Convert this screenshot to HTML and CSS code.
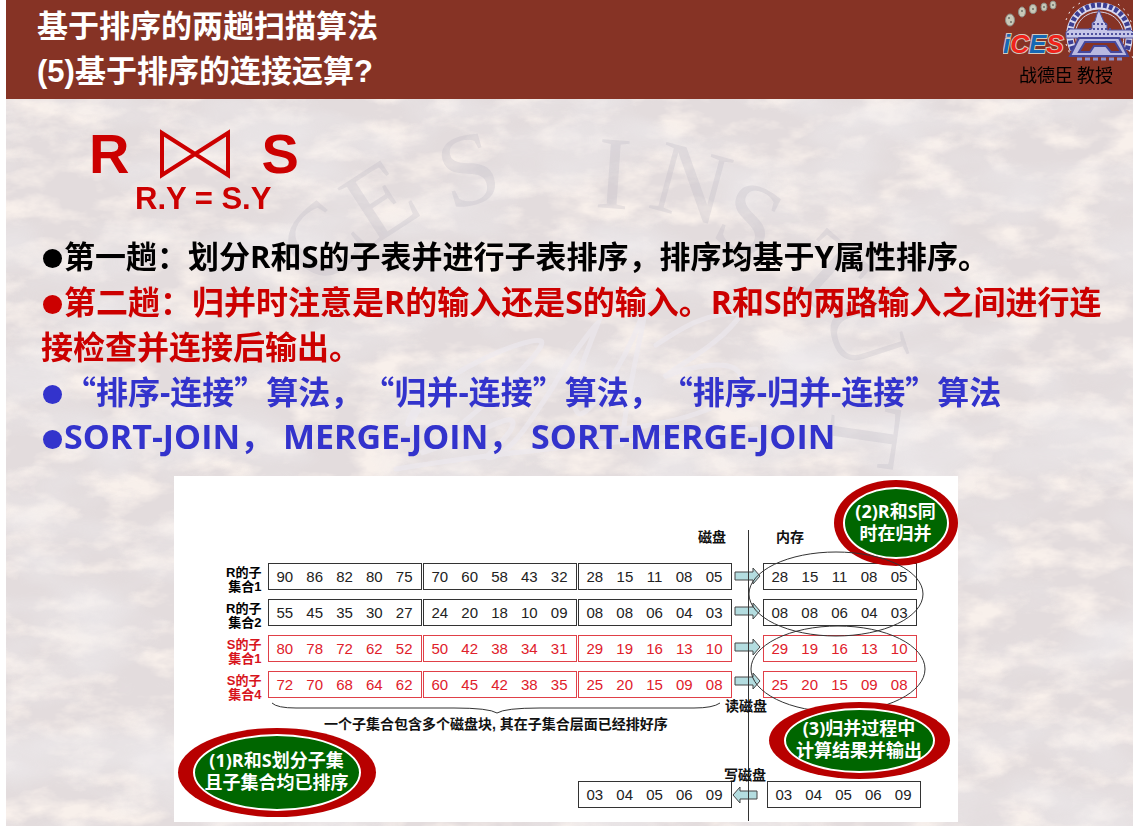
FILE: index.html
```html
<!DOCTYPE html>
<html lang="zh-CN">
<head>
<meta charset="utf-8">
<title>基于排序的连接运算</title>
<link rel="stylesheet" href="styles.css">
</head>
<body>
<main class="slide">
  <svg class="backdrop" viewBox="0 0 1127 727" preserveAspectRatio="xMidYMid slice" aria-hidden="true">
    <defs>
      <filter id="warm" x="0" y="0" width="100%" height="100%">
        <feTurbulence type="fractalNoise" baseFrequency="0.02 0.04" numOctaves="5" seed="8"/>
        <feColorMatrix values="0 0 0 0 0.94  0 0 0 0 0.87  0 0 0 0 0.83  3 0 0 0 -1.3"/>
      </filter>
      <filter id="cool" x="0" y="0" width="100%" height="100%">
        <feTurbulence type="fractalNoise" baseFrequency="0.008 0.016" numOctaves="3" seed="21"/>
        <feColorMatrix values="0 0 0 0 0.86  0 0 0 0 0.84  0 0 0 0 0.86  0 2.4 0 0 -1"/>
      </filter>
    </defs>
    <rect width="1127" height="727" filter="url(#warm)"/>
    <rect width="1127" height="727" filter="url(#cool)" opacity="0.7"/>
    <g class="engraving">
      <text transform="translate(318 192) rotate(-48)">C</text>
      <text transform="translate(366 148) rotate(-33)">E</text>
      <text transform="translate(444 112) rotate(-16)">S</text>
      <text transform="translate(588 108) rotate(4)">I</text>
      <text transform="translate(640 108) rotate(15)">N</text>
      <text transform="translate(702 138) rotate(27)">S</text>
      <text transform="translate(774 178) rotate(42)">T</text>
      <text transform="translate(816 206) rotate(72)">U</text>
      <text transform="translate(828 300) rotate(98)">T</text>
    </g>
    <g class="signature">
      <path d="M420 292c-10 30-25 44-15 24 20-40 120-80 130-74s-70 80-120 112c60-18 90-42 92-30s-40 40-20 34 40-40 60-70c10-20 40-60 45-64 -20 50-30 80-20 90s60-70 70-118c-8 50-24 110-26 150"/>
      <path d="M650 246c30-20 50-32 86-32 -20 30-60 50-78 64 30-12 66-18 76-4 10 30-60 50-120 56M390 370c120-20 260-30 360-40"/>
    </g>
  </svg>

  <header class="banner">
    <h1 class="title">基于排序的两趟扫描算法<br>(5)基于排序的连接运算?</h1>
    <div class="brand">
      <svg class="logos" width="130" height="64" viewBox="0 0 130 64" role="img" aria-label="ICES">
        <g fill="#c9c8b8" stroke="#8d8d86" stroke-width="1">
          <ellipse cx="7" cy="20" rx="4.500" ry="6"/><ellipse cx="19" cy="12" rx="3.500" ry="5"/><ellipse cx="30" cy="9" rx="3.500" ry="4.500"/><ellipse cx="41" cy="7" rx="3" ry="4"/><ellipse cx="50" cy="5" rx="3" ry="4"/>
        </g>
        <g fill="#6d7069"><circle cx="6" cy="18" r="1"/><circle cx="8" cy="22" r="1"/><circle cx="19" cy="11" r="1"/><circle cx="30" cy="9" r="1"/><circle cx="41" cy="7" r="1"/><circle cx="50" cy="5" r="1"/></g>
        <text class="ices" x="0" y="53"><tspan fill="#1668b4">i</tspan><tspan fill="#f0231b">C</tspan><tspan fill="#1668b4">E</tspan><tspan fill="#f0231b">S</tspan></text>
        <g fill="none" stroke="#3c3f93">
          <path stroke="#d9d8ee" stroke-width="7" d="M70 50C60 24 76 6 96 6s36 18 28 44"/>
          <path stroke-width="5" stroke-dasharray="4 2" d="M70 50C60 24 76 5 96 5s36 18 28 45"/>
          <path stroke="#d9d8ee" stroke-width="1" d="M74 44C68 26 80 12 96 12s28 14 24 32"/>
        </g>
        <path fill="#c6c6e8" stroke="#50539f" d="M96 10l2 5 3 7 3 2v6h24l3 3v5H63v-6l4-3h22v-6l3-2 2-7z"/>
        <path stroke="#50539f" stroke-width="2" stroke-dasharray="2 2" d="M64 34h66M86 29h22M90 24h14"/>
        <path fill="#b9b9e0" stroke="#45489c" stroke-width="2" d="M76 38h40l9 18H67zM82 42l-6 10h11l4-6h12l5 6h10l-6-10z"/>
        <path fill="none" stroke="#8d8fca" stroke-width="3" stroke-dasharray="5 3" d="M74 59h46"/>
        <path stroke="#efe9ee" stroke-dasharray="2 5" fill="none" d="M63 20l5-11 9-6M115 4l9 8 5 12M63 44l4 10M126 50l4 8"/>
      </svg>
      <p class="author">战德臣 教授</p>
    </div>
  </header>

  <section class="formula" aria-label="R join S on R.Y = S.Y">
    <div class="operands">
      <span>R</span>
      <svg width="72" height="52" viewBox="0 0 72 52" aria-hidden="true"><path d="M3 5v42L69 5v42z" fill="none" stroke="#c00" stroke-width="4"/></svg>
      <span>S</span>
    </div>
    <p class="condition">R.Y = S.Y</p>
  </section>

  <ul class="points">
    <li class="first">第一趟：划分R和S的子表并进行子表排序，排序均基于Y属性排序。</li>
    <li class="red">第二趟：归并时注意是R的输入还是S的输入。R和S的两路输入之间进行连接检查并连接后输出。</li>
    <li class="blue"><span class="q">“</span>排序-连接<span class="q">”</span>算法，<span class="q">“</span>归并-连接<span class="q">”</span>算法，<span class="q">“</span>排序-归并-连接<span class="q">”</span>算法</li>
    <li class="blue latin">SORT-JOIN， MERGE-JOIN， SORT-MERGE-JOIN</li>
  </ul>

  <figure class="diagram">
    <table class="runs">
      <tr><th scope="row">R的子<br>集合1</th>
        <td><div class="block"><span>90</span><span>86</span><span>82</span><span>80</span><span>75</span></div></td>
        <td><div class="block"><span>70</span><span>60</span><span>58</span><span>43</span><span>32</span></div></td>
        <td><div class="block"><span>28</span><span>15</span><span>11</span><span>08</span><span>05</span></div></td>
        <td class="memory"><div class="block"><span>28</span><span>15</span><span>11</span><span>08</span><span>05</span></div></td></tr>
      <tr><th scope="row">R的子<br>集合2</th>
        <td><div class="block"><span>55</span><span>45</span><span>35</span><span>30</span><span>27</span></div></td>
        <td><div class="block"><span>24</span><span>20</span><span>18</span><span>10</span><span>09</span></div></td>
        <td><div class="block"><span>08</span><span>08</span><span>06</span><span>04</span><span>03</span></div></td>
        <td class="memory"><div class="block"><span>08</span><span>08</span><span>06</span><span>04</span><span>03</span></div></td></tr>
      <tr class="s-run"><th scope="row">S的子<br>集合1</th>
        <td><div class="block"><span>80</span><span>78</span><span>72</span><span>62</span><span>52</span></div></td>
        <td><div class="block"><span>50</span><span>42</span><span>38</span><span>34</span><span>31</span></div></td>
        <td><div class="block"><span>29</span><span>19</span><span>16</span><span>13</span><span>10</span></div></td>
        <td class="memory"><div class="block"><span>29</span><span>19</span><span>16</span><span>13</span><span>10</span></div></td></tr>
      <tr class="s-run"><th scope="row">S的子<br>集合4</th>
        <td><div class="block"><span>72</span><span>70</span><span>68</span><span>64</span><span>62</span></div></td>
        <td><div class="block"><span>60</span><span>45</span><span>42</span><span>38</span><span>35</span></div></td>
        <td><div class="block"><span>25</span><span>20</span><span>15</span><span>09</span><span>08</span></div></td>
        <td class="memory"><div class="block"><span>25</span><span>20</span><span>15</span><span>09</span><span>08</span></div></td></tr>
    </table>
    <div class="output">
      <div class="block"><span>03</span><span>04</span><span>05</span><span>06</span><span>09</span></div>
      <div class="block"><span>03</span><span>04</span><span>05</span><span>06</span><span>09</span></div>
    </div>

    <div class="badge merge">(2)R和S同<br>时在归并</div>
    <svg class="links" viewBox="0 0 784 346">
      <g class="arrow">
        <path d="M561 96h18v-4l7 8-7 8v-4h-18z"/>
        <path d="M561 131h18v-4l7 8-7 8v-4h-18z"/>
        <path d="M561 167h18v-4l7 8-7 8v-4h-18z"/>
        <path d="M561 201h18v-4l7 8-7 8v-4h-18z"/>
        <path d="M583 315h-17v-4l-7 8 7 8v-4h17z"/>
      </g>
      <path class="line" d="M574.500 54v291"/>
      <ellipse class="line" cx="662" cy="118" rx="87" ry="42"/>
      <ellipse class="line" cx="664" cy="193" rx="87" ry="43"/>
      <path class="line" d="M98 227q5 5 24 5h158q35 0 43 5 8-5 43-5h154q19 0 26-5"/>
      <text x="524" y="66">磁盘</text>
      <text x="602" y="66">内存</text>
      <text x="551" y="235">读磁盘</text>
      <text x="550" y="304">写磁盘</text>
      <text x="150" y="253">一个子集合包含多个磁盘块, 其在子集合层面已经排好序</text>
    </svg>
    <div class="badge split">(1)R和S划分子集<br>且子集合均已排序</div>
    <div class="badge result">(3)归并过程中<br>计算结果并输出</div>
  </figure>
</main>
</body>
</html>
```
FILE: styles.css
```css
* {
  box-sizing: border-box;
}

body {
  margin: 0;
  background: #fff;
  font-family: "Open Sans", "Noto Sans CJK SC", sans-serif;
}

h1, p, ul, figure {
  margin: 0;
  padding: 0;
}

.slide {
  position: relative;
  z-index: 0;
  min-height: 100vh;
  margin-left: 6px;
  padding-bottom: 4px;
  background: #e3dcdd;
  overflow: hidden;
}

.backdrop {
  position: absolute;
  z-index: -1;
  inset: 99px 0 0;
  width: 100%;
  height: calc(100% - 99px);
}

.engraving {
  fill: #b9b6c2;
  opacity: 0.28;
  font: 104px "Liberation Serif", serif;
}

.signature {
  fill: none;
  stroke: #edeaf1;
  stroke-width: 5;
  stroke-linecap: round;
  opacity: 0.6;
}

/* Banner */
.banner {
  display: flex;
  justify-content: space-between;
  height: 99px;
  padding: 4px 0 0 31px;
  background: #863325;
}

.title {
  color: #fff;
  font: bold 31px/45px "Liberation Sans", "Noto Sans CJK SC", sans-serif;
}

.brand {
  width: 130px;
  margin-top: -4px;
}

.logos {
  display: block;
}

.ices {
  font: italic bold 26px "Liberation Sans Narrow", "Liberation Sans", sans-serif;
  stroke: #d3c9bd;
  stroke-width: 2px;
  paint-order: stroke;
}

.author {
  padding-left: 16px;
  font: 18px/20px "Noto Sans CJK SC", sans-serif;
  color: #000;
}

/* Join formula */
.formula {
  height: 135px;
  padding: 23px 0 0 83px;
  color: #c00;
  font-family: "Liberation Sans", sans-serif;
  font-weight: bold;
}

.operands {
  display: flex;
  align-items: center;
  gap: 30px;
  height: 64px;
  font-size: 56px;
  line-height: 64px;
}

.condition {
  padding-left: 46px;
  font-size: 31px;
  line-height: 26px;
}

/* Bullet points */
.points {
  padding: 0 24px 0 35px;
  list-style: none;
  color: #000;
  font-size: 32px;
  font-weight: bold;
  line-height: 45px;
  text-spacing-trim: space-all;
}

.points li::before {
  content: "";
  display: inline-block;
  width: 19px;
  height: 19px;
  margin: 0 2px;
  border-radius: 50%;
  background: currentColor;
}

.points .first {
  font-size: 31px;
}

.points .latin {
  font-size: 34px;
}

.red {
  color: #c00;
}

.blue {
  color: #33c;
}

.q {
  font-family: "Noto Sans CJK SC", sans-serif;
  line-height: 1;
}

/* Diagram */
.diagram {
  position: relative;
  width: 784px;
  margin: 17px auto 0;
  left: -4px;
  padding: 87px 0 14px;
  background: #fff;
}

.runs {
  border-collapse: collapse;
}

.runs td,
.runs th {
  height: 36px;
  padding: 0 1px 0 0;
  vertical-align: top;
}

.runs th {
  width: 94px;
  padding: 3px 6px 0 0;
  font: bold 13px/14px "Liberation Sans", "Noto Sans CJK SC", sans-serif;
  text-align: right;
}

.runs .memory {
  padding-left: 30px;
}

.block {
  display: flex;
  align-items: center;
  justify-content: space-between;
  width: 154px;
  height: 27px;
  padding: 0 8px;
  border: 1px solid #333;
  color: #222;
  font: 15px/25px "Liberation Sans", sans-serif;
}

.s-run th {
  color: #d8141c;
}

.s-run .block {
  border-color: #e04048;
  color: #e0202a;
}

.output {
  display: flex;
  gap: 35px;
  margin-top: 74px;
  padding-left: 404px;
}

.links {
  position: absolute;
  inset: 0;
  width: 100%;
  height: 100%;
}

.links text {
  fill: #111;
  font: bold 14px "Liberation Sans", "Noto Sans CJK SC", sans-serif;
}

.line {
  fill: none;
  stroke: #333;
  stroke-width: 1;
}

.arrow {
  fill: #b4dde0;
  stroke: #444;
  stroke-width: 1;
}

.badge {
  position: absolute;
  z-index: 0;
  display: flex;
  align-items: center;
  justify-content: center;
  padding-bottom: 3px;
  border-radius: 50%;
  background: #b80000;
  color: #fff;
  font-size: 18px;
  font-weight: bold;
  line-height: 22px;
  text-align: center;
  white-space: nowrap;
}

.badge::before {
  content: "";
  position: absolute;
  z-index: -1;
  inset: 6px 15px;
  border: 2px solid #fff;
  border-radius: 50%;
  background: #060;
}

.merge {
  left: 660px;
  top: 4px;
  width: 124px;
  height: 86px;
}

.merge::before {
  inset: 7px 9px;
}

.split {
  left: 4px;
  top: 252px;
  width: 198px;
  height: 89px;
}

.result {
  left: 595px;
  top: 226px;
  width: 181px;
  height: 77px;
}
```
